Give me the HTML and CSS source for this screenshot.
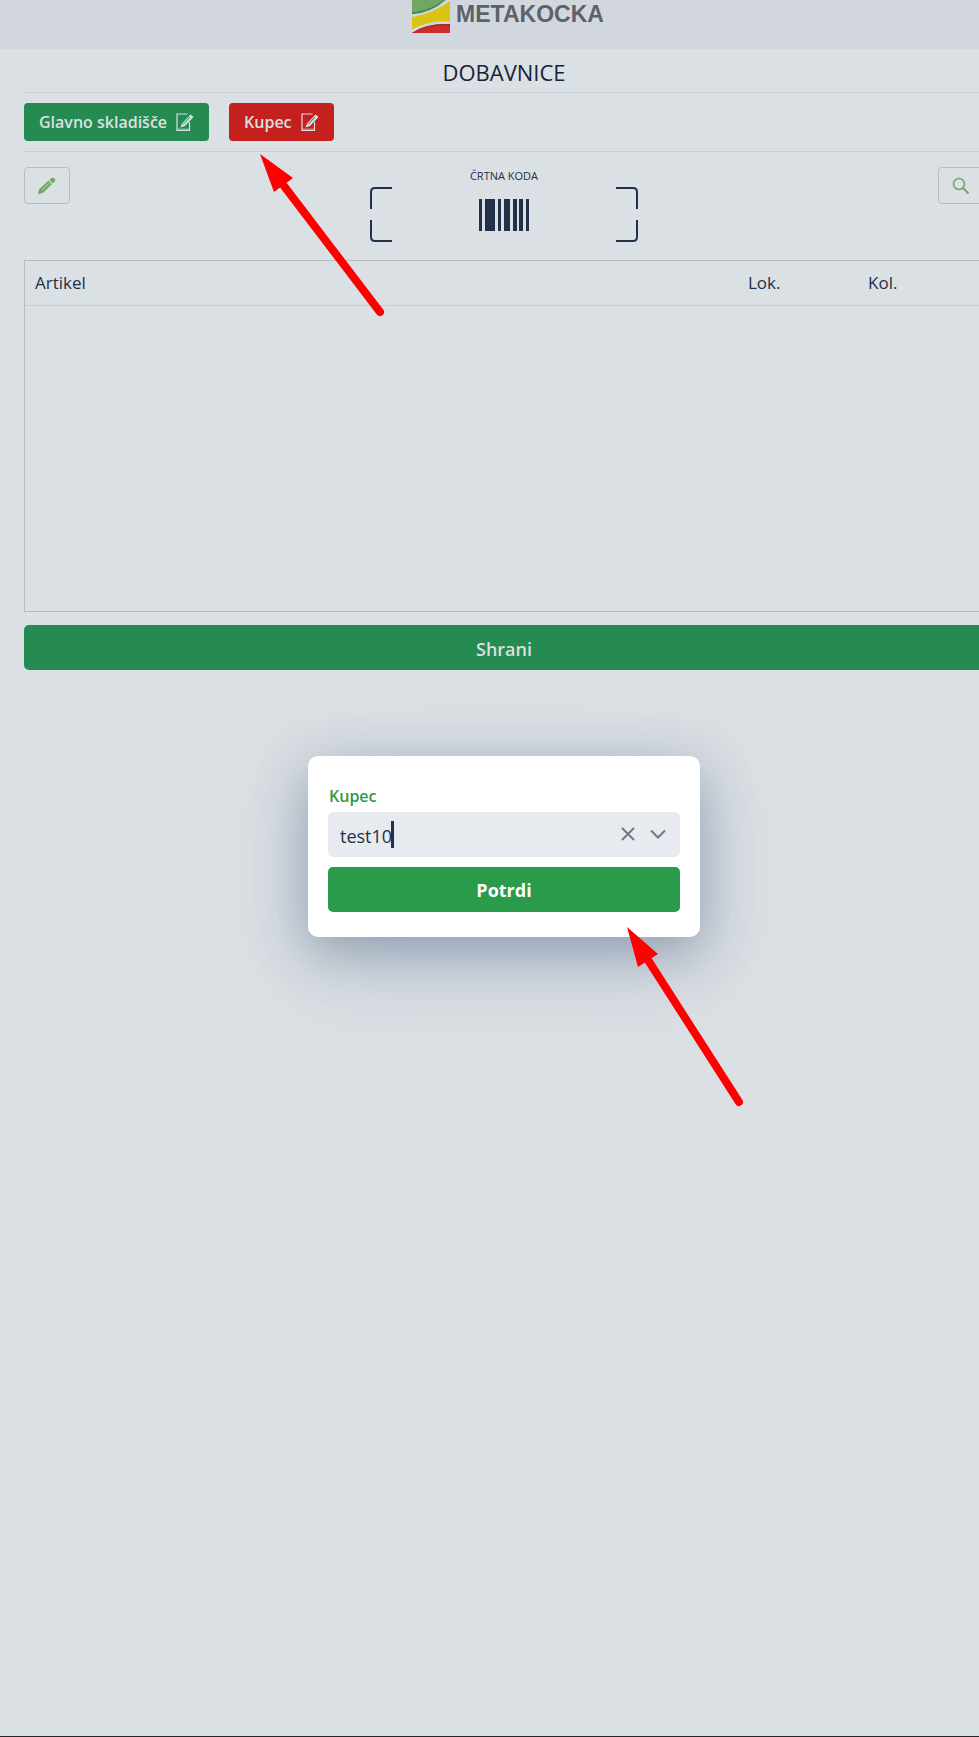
FILE: index.html
```html
<!DOCTYPE html>
<html lang="sl">
<head>
    <meta charset="UTF-8">
    <meta name="viewport" content="width=device-width, initial-scale=1.0">
    <title>Dobavnice</title>
    <link rel="stylesheet" href="styles.css">
</head>
<body>
    <div class="page">
        <header class="topbar">
            <svg class="logo" width="38" height="33" viewBox="0 0 38 33" aria-hidden="true">
                <path d="M0 0H33Q19 12 0 13.500Z" fill="#6fa763"/>
                <path d="M0 12.500Q18 11 31.500 0H33.500Q19 13 0 14.200Z" fill="#3f8a3f"/>
                <path d="M0 17Q20 14 38 1V21.500Q18 20 0 29.500Z" fill="#d8c413"/>
                <path d="M0 33Q14 23 38 24V33Z" fill="#d02c2c"/>
                <path d="M0 33Q14 23 38 24V26Q16 24 2 33Z" fill="#a02a2e"/>
            </svg>
            <span class="brand">METAKOCKA</span>
        </header>

        <main class="content">
            <h1 class="title">DOBAVNICE</h1>

            <div class="filters">
                <button class="btn btn-green" type="button">Glavno skladišče
                    <svg class="icon-edit" width="18" height="19" viewBox="0 0 18 19" aria-hidden="true">
                        <path d="M11.500 1H1V17.500H13.500V9" fill="none" stroke="currentColor" stroke-width="1.200"/>
                        <path d="M1 16.500H13.500" stroke="currentColor" stroke-width="2" opacity=".5"/>
                        <path d="M4.500 14.500L6 10.500L14.500 1.500L17.500 4L9 13Z" fill="currentColor"/>
                        <path d="M7 11.500L14 4" stroke="#268b50" stroke-width="1"/>
                    </svg>
                </button>
                <button class="btn btn-red" type="button">Kupec
                    <svg class="icon-edit" width="18" height="19" viewBox="0 0 18 19" aria-hidden="true">
                        <path d="M11.500 1H1V17.500H13.500V9" fill="none" stroke="currentColor" stroke-width="1.200"/>
                        <path d="M1 16.500H13.500" stroke="currentColor" stroke-width="2" opacity=".5"/>
                        <path d="M4.500 14.500L6 10.500L14.500 1.500L17.500 4L9 13Z" fill="currentColor"/>
                        <path d="M7 11.500L14 4" stroke="#c4201e" stroke-width="1"/>
                    </svg>
                </button>
            </div>

            <div class="scan-row">
                <button class="icon-btn" type="button" aria-label="Uredi">
                    <svg width="18" height="18" viewBox="0 0 18 18" aria-hidden="true">
                        <path d="M0 17.500L1 12.500L10.500 3.500L14 7L5.500 15.500Z" fill="currentColor"/>
                        <path d="M11.500 3L13 1.500Q15 0 16.500 1.500Q18 3.200 16.800 4.600L15 6.500Z" fill="currentColor"/>
                        <path d="M4 13L12 5.500" stroke="#dbe0e4" stroke-width=".7"/>
                    </svg>
                </button>
                <div class="scanner">
                    <span class="scan-label">ČRTNA KODA</span>
                    <svg width="268" height="55" viewBox="0 0 268 55" aria-hidden="true">
                        <g fill="none" stroke="#22314a" stroke-width="2">
                            <path d="M22 1H5Q1 1 1 5V22"/>
                            <path d="M1 33V50Q1 54 5 54H22"/>
                            <path d="M246 1H263Q267 1 267 5V22"/>
                            <path d="M267 33V50Q267 54 263 54H246"/>
                        </g>
                        <path fill="#22314a" d="M109 12h3v32h-3zM115 12h10v32h-10zM128 12h3v32h-3zM134 12h6v32h-6zM143 12h4v32h-4zM149 12h4v32h-4zM156 12h3v32h-3z"/>
                    </svg>
                </div>
                <button class="icon-btn" type="button" aria-label="Išči">
                    <svg width="18" height="18" viewBox="0 0 18 18" aria-hidden="true">
                        <circle cx="7" cy="7" r="5.500" fill="none" stroke="currentColor" stroke-width="1.500"/>
                        <path d="M11 11L16.500 16.500" stroke="currentColor" stroke-width="2"/>
                    </svg>
                </button>
            </div>

            <div class="items">
                <table>
                    <thead>
                        <tr>
                            <th>Artikel</th>
                            <th class="col-location">Lok.</th>
                            <th class="col-quantity">Kol.</th>
                        </tr>
                    </thead>
                </table>
            </div>

            <button class="btn-wide btn-save" type="button">Shrani</button>
        </main>

        <div class="overlay">
            <form class="dialog" role="dialog" aria-label="Kupec">
                <label class="dialog-label" for="customer">Kupec</label>
                <div class="combo">
                    <div class="combo-value">
                        <input id="customer" type="text" value="test10" autocomplete="off">
                        <span class="caret"></span>
                    </div>
                    <button class="combo-btn" type="button" aria-label="Počisti">
                        <svg width="14" height="14" viewBox="0 0 14 14" aria-hidden="true">
                            <path d="M1.500 1.500L12.500 12.500M12.500 1.500L1.500 12.500" stroke="currentColor" stroke-width="2" stroke-linecap="round"/>
                        </svg>
                    </button>
                    <button class="combo-btn" type="button" aria-label="Odpri">
                        <svg width="16" height="14" viewBox="0 0 16 14" aria-hidden="true">
                            <path d="M1.500 4L8 10.500L14.500 4" fill="none" stroke="currentColor" stroke-width="2" stroke-linecap="round"/>
                        </svg>
                    </button>
                </div>
                <button class="btn-wide btn-confirm" type="button">Potrdi</button>
            </form>
        </div>

        <!-- Arrows over the page -->
        <svg class="arrow arrow-customer" width="126" height="164" viewBox="0 0 126 164" aria-hidden="true">
            <path d="M24 32L120 158" stroke="#f00" stroke-width="8" stroke-linecap="round"/>
            <path d="M0 0L33 24L14 38Z" fill="#f00"/>
        </svg>
        <svg class="arrow arrow-confirm" width="118" height="182" viewBox="0 0 118 182" aria-hidden="true">
            <path d="M21 33L112 175" stroke="#f00" stroke-width="8" stroke-linecap="round"/>
            <path d="M0 0L31 27L11 40Z" fill="#f00"/>
        </svg>
    </div>
</body>
</html>
```
FILE: styles.css
```css
* {
    box-sizing: border-box;
}

body {
    margin: 0;
    overflow: hidden;
    background-color: #dbe0e4;
    color: #22314a;
    font-family: "Open Sans", "Noto Sans", sans-serif;
    font-size: 17px;
}

button,
input {
    font-family: inherit;
}

svg {
    display: block;
}

/* The page is a bit wider than the window */
.page {
    position: relative;
    min-height: 100vh;
    margin-right: -29px;
    border-bottom: 1px solid #26262b;
}

.topbar {
    display: flex;
    justify-content: center;
    gap: 6px;
    height: 49px;
    padding-left: 8px;
    background-color: #d2d6de;
}

.brand {
    font-family: "Liberation Sans", Arial, sans-serif;
    font-size: 23px;
    font-weight: bold;
    line-height: 28px;
    color: #5c6268;
}

.content {
    padding: 0 24px;
}

.title {
    margin: 0;
    height: 44px;
    line-height: 46px;
    font-size: 22px;
    font-weight: 400;
    text-align: center;
    color: #17223b;
    border-bottom: 1px solid #c8cdd6;
}

/* Buttons */
.filters {
    display: flex;
    gap: 20px;
    padding: 10px 0;
    border-bottom: 1px solid #c8cdd6;
}

.btn {
    display: flex;
    align-items: center;
    gap: 9px;
    height: 38px;
    padding: 0 15px;
    border: none;
    border-radius: 4px;
    color: #dbe0e4;
    font-size: 16px;
    font-weight: 600;
    cursor: pointer;
}

.btn-green,
.btn-save {
    background-color: #268b50;
}

.btn-red {
    background-color: #c4201e;
}

.btn-wide {
    display: block;
    width: 100%;
    height: 45px;
    padding: 2px 0 0;
    border: none;
    border-radius: 5px;
    font-size: 18px;
    font-weight: 600;
    cursor: pointer;
}

.btn-save {
    margin-top: 13px;
    color: #dbe0e4;
}

.btn-confirm {
    margin-top: 10px;
    background-color: #2a9a4b;
    color: #fff;
    font-weight: 700;
}

/* Barcode row */
.scan-row {
    display: flex;
    justify-content: space-between;
    align-items: flex-start;
    padding: 15px 0 18px;
}

.icon-btn {
    display: flex;
    align-items: center;
    justify-content: center;
    width: 46px;
    height: 37px;
    padding: 0;
    background: none;
    border: 1px solid #b7bdc4;
    border-radius: 4px;
    color: #70a863;
    cursor: pointer;
}

.scanner {
    display: flex;
    flex-direction: column;
    align-items: center;
}

.scan-label {
    height: 20px;
    line-height: 18px;
    font-size: 11px;
}

/* Items */
.items {
    height: 352px;
    border: 1px solid #b7bdc4;
}

.items table {
    width: 100%;
    border-collapse: collapse;
}

.items th {
    height: 44px;
    padding: 0 10px;
    font-weight: 500;
    text-align: left;
    border-bottom: 1px solid #c8cdd0;
}

.items .col-location {
    width: 120px;
}

.items .col-quantity {
    width: 125px;
}

/* Dialog */
.overlay {
    position: absolute;
    inset: 0;
    display: flex;
    align-items: center;
    justify-content: center;
    padding-bottom: 44px;
}

.dialog {
    width: 392px;
    padding: 25px 20px;
    background-color: #fff;
    border-radius: 10px;
    box-shadow: 0 15px 50px rgba(50, 75, 105, 0.35), 0 25px 100px rgba(80, 100, 150, 0.2);
}

.dialog-label {
    display: block;
    height: 31px;
    padding-left: 1px;
    line-height: 30px;
    font-size: 16px;
    font-weight: 600;
    color: #2a9a4b;
}

.combo {
    display: flex;
    align-items: center;
    gap: 15px;
    height: 45px;
    padding: 0 14px 0 12px;
    background-color: #e7ebef;
    border-radius: 5px;
}

.combo-value {
    position: relative;
    flex: 1;
}

.combo input {
    display: block;
    width: 100%;
    height: 45px;
    padding: 3px 0 0;
    border: none;
    outline: none;
    background: none;
    color: #22314a;
    font-size: 18px;
}

.caret {
    position: absolute;
    left: 51px;
    top: 9px;
    width: 3px;
    height: 27px;
    background-color: #22314a;
}

.combo-btn {
    padding: 0;
    border: none;
    background: none;
    color: #6d7889;
    cursor: pointer;
}

.arrow {
    position: absolute;
    pointer-events: none;
}

.arrow-customer {
    left: 260px;
    top: 154px;
}

.arrow-confirm {
    left: 627px;
    top: 927px;
}
```
